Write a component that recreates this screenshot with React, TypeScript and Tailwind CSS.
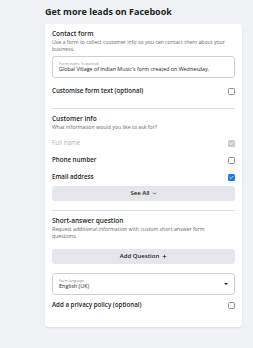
import { ChevronDown, Plus, Check } from 'lucide-react'

function Box({ state }: { state?: 'on' | 'disabled' }) {
  if (state === 'on')
    return (
      <span className="w-[7px] h-[7px] rounded-[1.5px] bg-[#1877f2] flex items-center justify-center">
        <Check className="w-[5px] h-[5px] text-white" strokeWidth={4} />
      </span>
    )
  if (state === 'disabled')
    return (
      <span className="w-[7px] h-[7px] rounded-[1.5px] bg-[#c8cbd0] flex items-center justify-center">
        <Check className="w-[5px] h-[5px] text-white" strokeWidth={4} />
      </span>
    )
  return <span className="w-[7px] h-[7px] rounded-[1.5px] border border-[#8a8d91] bg-white" />
}

function Row({ label, state, muted }: { label: string; state?: 'on' | 'disabled'; muted?: boolean }) {
  return (
    <div className="flex items-center justify-between h-[17px]">
      <span className={`text-[6.2px] ${muted ? 'text-[#b0b3b8]' : 'font-semibold text-[#1c1e21]'}`}>{label}</span>
      <Box state={state} />
    </div>
  )
}

export default function App() {
  return (
    <div className="min-h-screen bg-[#f0f2f5] px-[45px] pt-[6px] pb-[20px] font-['Open_Sans',Arial,sans-serif] text-[#1c1e21]">
      <h1 className="text-[9px] font-bold leading-[12px] mb-[6px]">Get more leads on Facebook</h1>
      <div className="w-[197px] bg-white rounded-[3px] shadow-[0_1px_2px_rgba(0,0,0,0.1)] px-[7px] pt-[5px] pb-[13.5px]">
        <p className="text-[6.5px] font-semibold leading-[10px]">Contact form</p>
        <p className="text-[5.2px] leading-[7px] text-[#65676b]">
          Use a form to collect customer info so you can contact them about your business.
        </p>
        <div className="mt-[3px] h-[22px] rounded-[3px] border border-[#ccd0d5] px-[6px] pt-[3.5px]">
          <p className="text-[3.9px] leading-[5px] text-[#8a8d91]">Form name (required)</p>
          <p className="text-[5.35px] leading-[7px] whitespace-nowrap overflow-hidden">Global Village of Indian Music's form created on Wednesday,</p>
        </div>
        <div className="mt-[4.5px]">
          <Row label="Customise form text (optional)" />
        </div>
        <div className="h-px bg-[#dadde1] mt-[8.5px] mb-[5px]" />
        <p className="text-[6.5px] font-semibold leading-[10px]">Customer info</p>
        <p className="text-[5.2px] leading-[7px] text-[#65676b]">What information would you like to ask for?</p>
        <div className="mt-[3.5px]">
          <Row label="Full name" state="disabled" muted />
          <Row label="Phone number" />
          <Row label="Email address" state="on" />
        </div>
        <button className="mt-[0.5px] w-full h-[15px] rounded-[3px] bg-[#e4e6eb] flex items-center justify-center gap-[2px] text-[6px] font-semibold">
          See All <ChevronDown className="w-[5px] h-[5px]" strokeWidth={3} />
        </button>
        <div className="h-px bg-[#dadde1] mt-[9px] mb-[5px]" />
        <p className="text-[6.5px] font-semibold leading-[10px]">Short-answer question</p>
        <p className="text-[5.2px] leading-[7px] text-[#65676b] pr-[20px]">
          Request additional information with custom short-answer form questions.
        </p>
        <button className="mt-[9px] w-full h-[15px] rounded-[3px] bg-[#e4e6eb] flex items-center justify-center gap-[3px] text-[6px] font-semibold">
          Add Question <Plus className="w-[5px] h-[5px]" strokeWidth={3} />
        </button>
        <div className="mt-[9px] h-[22px] rounded-[3px] border border-[#ccd0d5] px-[6px] pt-[4px] flex items-start justify-between">
          <div>
            <p className="text-[3.6px] leading-[5px] text-[#8a8d91]">Form language</p>
            <p className="text-[5.5px] leading-[7px]">English (UK)</p>
          </div>
          <span className="mt-[5px] w-0 h-0 border-l-[2px] border-r-[2px] border-t-[2.5px] border-l-transparent border-r-transparent border-t-[#1c1e21]" />
        </div>
        <div className="mt-[1.5px]">
          <Row label="Add a privacy policy (optional)" />
        </div>
      </div>
    </div>
  )
}
